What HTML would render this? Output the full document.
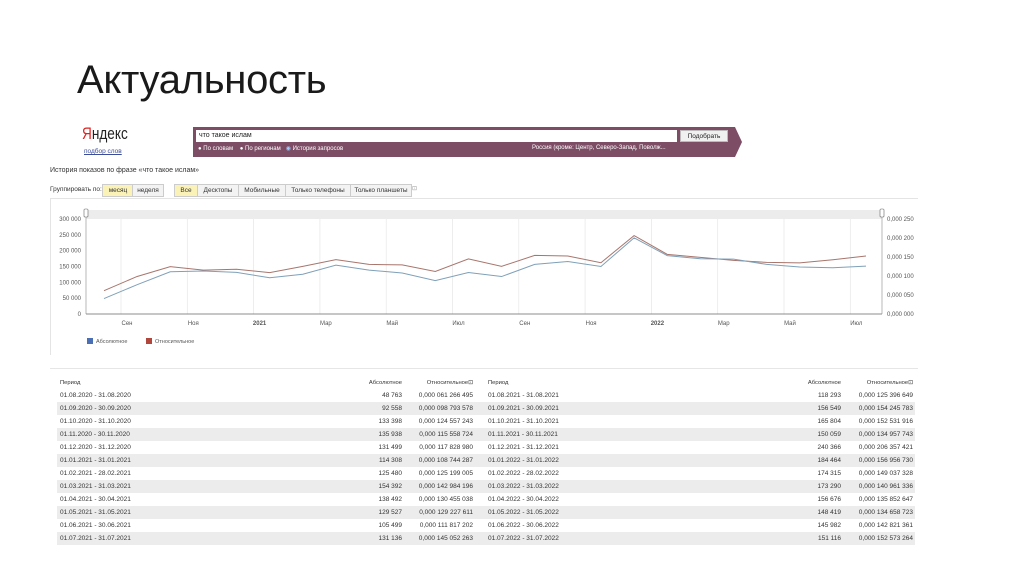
<!DOCTYPE html>
<html><head><meta charset="utf-8"><style>
body{margin:0;width:1024px;height:574px;background:#fff;position:relative;overflow:hidden;font-family:"Liberation Sans",sans-serif;}
.a{position:absolute;white-space:nowrap}
.s{font-size:7px;color:#333}
.btn{position:absolute;top:184px;height:11px;border:1px solid #ccc;background:#f3f3f3;font-size:6.5px;line-height:11px;text-align:center;color:#333}
.row{position:absolute;height:13px;font-size:6.5px;line-height:13px;color:#333}
.row span{position:absolute}
</style></head><body>
<div class="a" style="left:77px;top:58px;font-size:40px;color:#1a1a1a;letter-spacing:-0.3px">Актуальность</div>
<div class="a" style="left:82px;top:124px;font-size:17px;color:#222;transform:scaleX(0.8);transform-origin:left"><span style="color:#d22">Я</span>ндекс</div>
<div class="a" style="left:84px;top:148px;font-size:6.5px;color:#3a4b9a;text-decoration:underline">подбор слов</div>
<svg class="a" style="left:193px;top:127px" width="552" height="30"><polygon points="0,0 542,0 549,15 542,30 0,30" fill="#7d4d66"/></svg>
<div class="a" style="left:196px;top:130px;width:481px;height:12px;background:#fff;font-size:7px;line-height:12px;padding-left:3px;box-sizing:border-box;color:#222">что такое ислам</div>
<div class="a" style="left:680px;top:130px;width:48px;height:12px;background:#f0f0f0;border:1px solid #bbb;box-sizing:border-box;font-size:6.5px;line-height:11px;text-align:center;color:#222">Подобрать</div>
<div class="a" style="left:198px;top:145px;font-size:6px;color:#fff">● По словам &nbsp;&nbsp;&nbsp;● По регионам &nbsp;&nbsp;<span style="color:#9cf">◉</span> История запросов</div>
<div class="a" style="left:532px;top:145px;font-size:6px;color:#fff">Россия (кроме: Центр, Северо-Запад, Поволж...</div>
<div class="a s" style="left:50px;top:167px">История показов по фразе «что такое ислам»</div>
<div class="a" style="left:50px;top:186px;font-size:6.5px;color:#333">Группировать по:</div>
<div class="btn" style="left:102px;width:30px;background:#fbf2b8">месяц</div>
<div class="btn" style="left:132px;width:30px">неделя</div>
<div class="btn" style="left:174px;width:22px;background:#fbf2b8">Все</div>
<div class="btn" style="left:197px;width:40px">Десктопы</div>
<div class="btn" style="left:238px;width:46px">Мобильные</div>
<div class="btn" style="left:285px;width:64px">Только телефоны</div>
<div class="btn" style="left:350px;width:60px">Только планшеты</div>
<div class="a" style="left:412px;top:185px;font-size:6px;color:#999">⊡</div>
<div class="a" style="left:50px;top:198px;width:868px;height:157px;border-top:1px solid #e4e4e4;border-left:1px solid #e4e4e4;box-sizing:border-box"></div>
<svg class="a" style="left:0;top:0" width="1024" height="574" id="ch"></svg>
<div class="a" id="tb" style="left:0;top:0"></div>
<div class="a" style="left:50px;top:368px;width:868px;height:1px;background:#e6e6e6"></div>
<script>
var blue=[48.763,92.558,133.398,135.938,131.499,114.308,125.48,154.392,138.492,129.527,105.499,131.136,118.293,156.549,165.804,150.059,240.366,184.464,174.315,173.29,156.676,148.419,145.982,151.116];
var rel=[61.27,98.79,124.56,115.56,117.83,108.74,125.20,142.98,130.46,129.23,111.82,145.05,125.40,154.25,152.53,134.96,206.36,156.96,149.04,140.96,135.85,134.66,142.82,152.57];
var s='<rect x="86" y="210" width="796" height="9" fill="#ececec"/>';
var labs=['Сен','Ноя','2021','Мар','Май','Июл','Сен','Ноя','2022','Мар','Май','Июл'];
for(var i=0;i<12;i++){var x=121+i*66.3;s+='<line x1="'+x+'" y1="219" x2="'+x+'" y2="314" stroke="#e6e6e6" stroke-width="0.7"/>';
s+='<text x="'+(x+6)+'" y="325" font-size="6" fill="#555" text-anchor="middle" font-weight="'+(labs[i].length==4?'bold':'normal')+'">'+labs[i]+'</text>';}
var ll=['300 000','250 000','200 000','150 000','100 000','50 000','0'],rl=['0,000 250','0,000 200','0,000 150','0,000 100','0,000 050','0,000 000'];
for(i=0;i<7;i++){var y=219+i*95/6;s+='<text x="81" y="'+(y+2)+'" font-size="6" fill="#555" text-anchor="end">'+ll[i]+'</text>';}
for(i=0;i<6;i++){var y=219+i*19;s+='<text x="887" y="'+(y+2)+'" font-size="6" fill="#555">'+rl[i]+'</text>';}
s+='<line x1="86" y1="314" x2="882" y2="314" stroke="#666" stroke-width="0.8"/><line x1="86" y1="210" x2="86" y2="314" stroke="#888" stroke-width="0.6"/><line x1="882" y1="210" x2="882" y2="314" stroke="#888" stroke-width="0.6"/>';
s+='<rect x="84" y="209" width="4" height="8" rx="1" fill="#fff" stroke="#666" stroke-width="0.6"/><rect x="880" y="209" width="4" height="8" rx="1" fill="#fff" stroke="#666" stroke-width="0.6"/>';
var pb='',pr='';for(i=0;i<24;i++){var x=104+i*33.13;pb+=x+','+(314-blue[i]*0.3167)+' ';pr+=x+','+(314-rel[i]*0.38)+' ';}
s+='<polyline points="'+pr+'" fill="none" stroke="#a8756c" stroke-width="1"/><polyline points="'+pb+'" fill="none" stroke="#7fa0b8" stroke-width="1"/>';
s+='<rect x="87" y="338" width="6" height="6" fill="#4a6fb5"/><text x="96" y="343" font-size="5.5" fill="#555">Абсолютное</text><rect x="146" y="338" width="6" height="6" fill="#b0463c"/><text x="155" y="343" font-size="5.5" fill="#555">Относительное</text>';
document.getElementById('ch').innerHTML=s;
var L=[['01.08.2020 - 31.08.2020','48 763','0,000 061 266 495'],['01.09.2020 - 30.09.2020','92 558','0,000 098 793 578'],['01.10.2020 - 31.10.2020','133 398','0,000 124 557 243'],['01.11.2020 - 30.11.2020','135 938','0,000 115 558 724'],['01.12.2020 - 31.12.2020','131 499','0,000 117 828 980'],['01.01.2021 - 31.01.2021','114 308','0,000 108 744 287'],['01.02.2021 - 28.02.2021','125 480','0,000 125 199 005'],['01.03.2021 - 31.03.2021','154 392','0,000 142 984 196'],['01.04.2021 - 30.04.2021','138 492','0,000 130 455 038'],['01.05.2021 - 31.05.2021','129 527','0,000 129 227 611'],['01.06.2021 - 30.06.2021','105 499','0,000 111 817 202'],['01.07.2021 - 31.07.2021','131 136','0,000 145 052 263']];
var R=[['01.08.2021 - 31.08.2021','118 293','0,000 125 396 649'],['01.09.2021 - 30.09.2021','156 549','0,000 154 245 783'],['01.10.2021 - 31.10.2021','165 804','0,000 152 531 916'],['01.11.2021 - 30.11.2021','150 059','0,000 134 957 743'],['01.12.2021 - 31.12.2021','240 366','0,000 206 357 421'],['01.01.2022 - 31.01.2022','184 464','0,000 156 956 730'],['01.02.2022 - 28.02.2022','174 315','0,000 149 037 328'],['01.03.2022 - 31.03.2022','173 290','0,000 140 961 336'],['01.04.2022 - 30.04.2022','156 676','0,000 135 852 647'],['01.05.2022 - 31.05.2022','148 419','0,000 134 658 723'],['01.06.2022 - 30.06.2022','145 982','0,000 142 821 361'],['01.07.2022 - 31.07.2022','151 116','0,000 152 573 264']];
var h='';
function row(y,bg,a,b,c,d,e,f,bold){h+='<div class="row" style="left:57px;top:'+y+'px;width:858px;background:'+bg+';font-size:'+(bold?'5.8':'6.5')+'px"><span style="left:3px">'+a+'</span><span style="right:513px">'+b+'</span><span style="right:442px">'+c+'</span><span style="left:431px">'+d+'</span><span style="right:74px">'+e+'</span><span style="right:2px">'+f+'</span></div>';}
row(377,'#fff','Период','Абсолютное','Относительное⊡','Период','Абсолютное','Относительное⊡',1);
h+='<div class="a" style="left:57px;top:389px;width:858px;height:1px;background:#ddd"></div>';
for(i=0;i<12;i++)row(389+i*13,i%2?'#ececec':'#fff',L[i][0],L[i][1],L[i][2],R[i][0],R[i][1],R[i][2]);
document.getElementById('tb').innerHTML=h;
</script>
</body></html>
